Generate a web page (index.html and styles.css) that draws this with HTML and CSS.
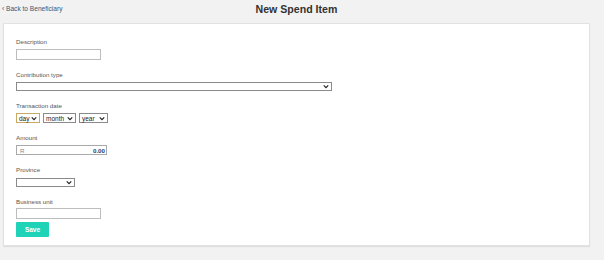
FILE: index.html
```html
<!DOCTYPE html>
<html>
<head>
<meta charset="utf-8">
<link rel="stylesheet" href="styles.css">
</head>
<body>
<header class="topbar">
  <a class="back" href="#">&lsaquo; Back to Beneficiary</a>
  <h1 class="title">New Spend Item</h1>
</header>
<main class="card">
  <div class="field">
    <label class="lbl">Description</label>
    <div class="input w84"></div>
  </div>
  <div class="field">
    <label class="lbl">Contribution type</label>
    <div class="select sel-wide"><span></span><svg class="chev" viewBox="0 0 8 6"><path d="M1 1.5 L4 4.5 L7 1.5" /></svg></div>
  </div>
  <div class="field">
    <label class="lbl">Transaction date</label>
    <div class="date-row">
      <div class="select sel-date focus"><span>day</span><svg class="chev" viewBox="0 0 8 6"><path d="M1 1.5 L4 4.5 L7 1.5" /></svg></div>
      <div class="select sel-date w-month"><span>month</span><svg class="chev" viewBox="0 0 8 6"><path d="M1 1.5 L4 4.5 L7 1.5" /></svg></div>
      <div class="select sel-date w-year"><span>year</span><svg class="chev" viewBox="0 0 8 6"><path d="M1 1.5 L4 4.5 L7 1.5" /></svg></div>
    </div>
  </div>
  <div class="field">
    <label class="lbl">Amount</label>
    <div class="input amount"><span class="cur">R</span><span class="val">0.00</span></div>
  </div>
  <div class="field">
    <label class="lbl">Province</label>
    <div class="select sel-prov"><span></span><svg class="chev" viewBox="0 0 8 6"><path d="M1 1.5 L4 4.5 L7 1.5" /></svg></div>
  </div>
  <div class="field last">
    <label class="lbl lbl-bu">Business unit</label>
    <div class="input w84"></div>
  </div>
  <button class="save">Save</button>
</main>
</body>
</html>
```

FILE: styles.css
```css
* { box-sizing: border-box; }
html, body { margin: 0; padding: 0; }
body {
  background: #f2f2f2;
  font-family: "Liberation Sans", Arial, sans-serif;
  width: 604px;
  height: 260px;
  overflow: hidden;
}
.topbar {
  height: 23px;
  display: flex;
  align-items: center;
  padding-left: 2px;
  width: 593px;
  position: relative;
}
.back {
  color: #3b5876;
  text-decoration: none;
  font-size: 6.6px;
  margin-top: -6px;
}
.title {
  margin: 0;
  font-size: 10.6px;
  font-weight: bold;
  color: #333;
  position: absolute;
  left: 0;
  right: 0;
  top: 3px;
  text-align: center;
  pointer-events: none;
}
.card {
  margin-left: 3px;
  width: 587px;
  height: 223px;
  background: #fff;
  border: 1px solid #e2e2e2;
  box-shadow: 0 1px 1px rgba(0,0,0,0.08);
  padding: 14px 12px 8px;
  display: flex;
  flex-direction: column;
  align-items: flex-start;
}
.field {
  display: flex;
  flex-direction: column;
  align-items: flex-start;
  margin-bottom: 11px;
}
.field.last { margin-bottom: 3px; }
.lbl {
  font-size: 6.2px;
  line-height: 8px;
  height: 8px;
  color: #555;
  margin-bottom: 3px;
}
.lbl-bu { margin-bottom: 2px; }
.input {
  height: 11px;
  border: 1px solid #bdbdbd;
  background: #fff;
}
.w84 { width: 85px; }
.select {
  display: flex;
  align-items: center;
  justify-content: space-between;
  border: 1px solid #8a8a8a;
  background: #fff;
  font-size: 6.5px;
  color: #222;
  padding: 0 2px 0 2px;
}
.chev {
  width: 6px;
  height: 5px;
  fill: none;
  stroke: #222;
  stroke-width: 1.6;
}
.sel-wide { width: 316px; height: 9px; }
.date-row { display: flex; gap: 3px; }
.sel-date { height: 10px; width: 24px; }
.sel-date.focus { border-color: #c8a866; }
.w-month { width: 33px; }
.w-year { width: 29px; }
.amount {
  width: 91px;
  height: 10px;
  display: flex;
  align-items: center;
  justify-content: space-between;
  padding: 0 1px 0 3px;
  font-size: 6.2px;
  border-color: #a9a9a9;
}
.cur { color: #888; }
.val { color: #163f75; font-weight: bold; }
.sel-prov { width: 59px; height: 9px; margin-top: 1px; }
.save {
  width: 33px;
  height: 15px;
  border: none;
  border-radius: 1px;
  background: #1fd3b9;
  color: #fff;
  font-family: "Liberation Sans", Arial, sans-serif;
  font-weight: bold;
  font-size: 6.5px;
  padding: 0;
}
```
